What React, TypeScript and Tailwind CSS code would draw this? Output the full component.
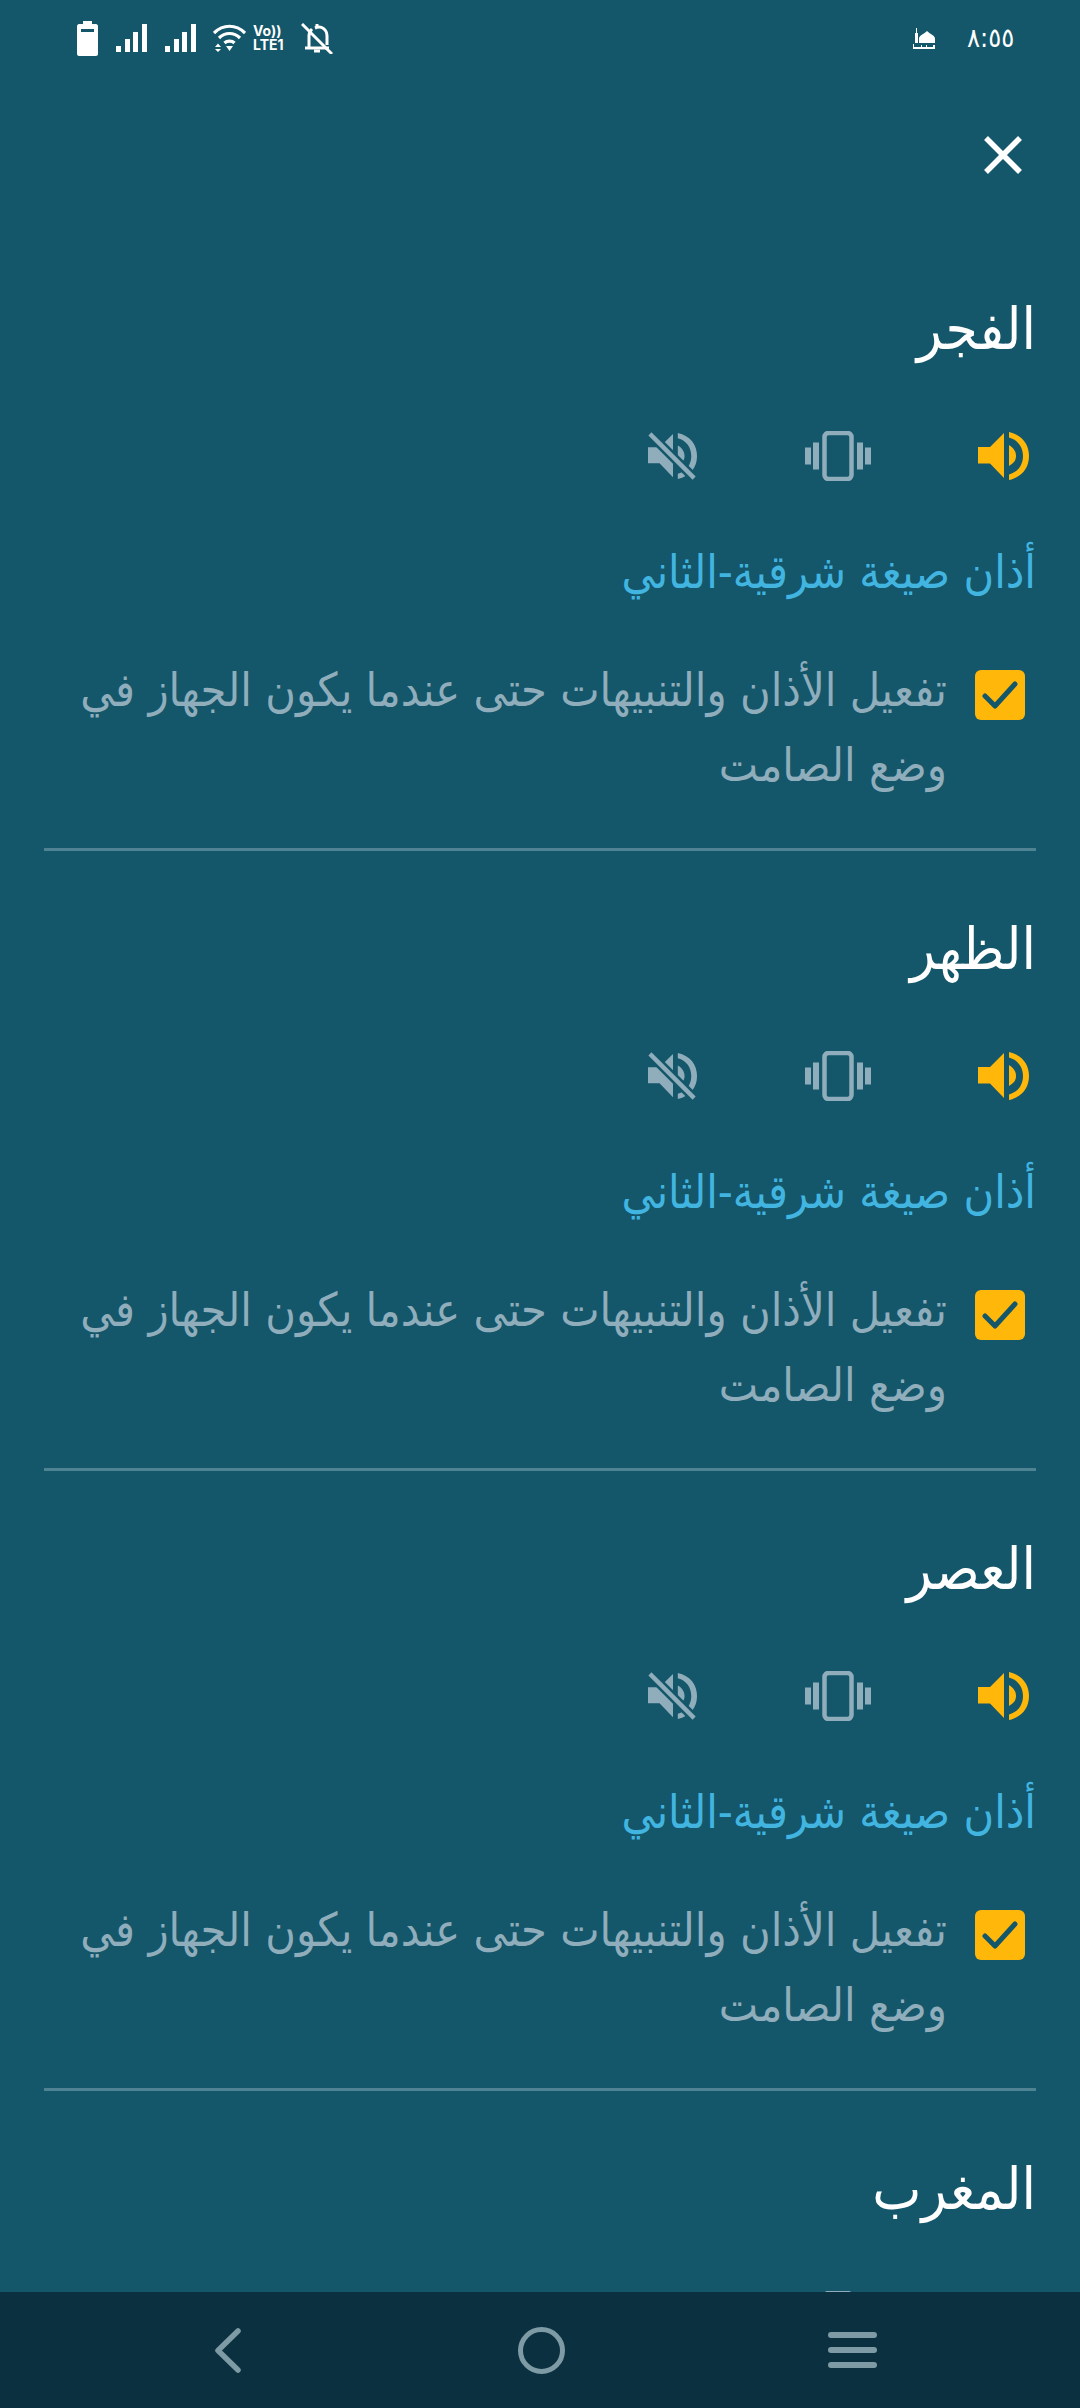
const Speaker = ({ color }: { color: string }) => (
  <g fill={color}>
    <path d="M0 16H12L26 2V47L12 32.5H0Z" />
    <path d="M31 14C36 17 38 21 38 25C38 29 36 32 31 35Z" />
    <path d="M31 1C44 4 51 13 51 25C51 37 44 46 31 49V43.500C40 41 45 34 45 25C45 16 40 9 31 6.500Z" />
  </g>
);

const VolumeOn = () => (
  <svg width="52" height="50" viewBox="0 0 52 50" className="shrink-0">
    <Speaker color="#ffb80a" />
  </svg>
);

const Vibrate = () => (
  <svg width="66" height="50" viewBox="0 0 66 50" className="shrink-0" fill="#8fadbb">
    <rect x="19.500" y="2" width="27" height="46" rx="4" fill="none" stroke="#8fadbb" strokeWidth="4.500" />
    <rect x="8" y="11.500" width="6" height="27" />
    <rect x="52" y="11.500" width="6" height="27" />
    <rect x="0" y="16.500" width="6" height="17" />
    <rect x="60" y="16.500" width="6" height="17" />
  </svg>
);

const Mute = () => (
  <svg width="50" height="50" viewBox="0 0 52 50" className="shrink-0">
    <Speaker color="#8fadbb" />
    <path d="M3 3L48 48" stroke="#14566a" strokeWidth="10" />
    <path d="M2 2L48 48" stroke="#8fadbb" strokeWidth="4.500" />
  </svg>
);

const Signal = () => (
  <svg width="31" height="28" viewBox="0 0 31 28" className="shrink-0" fill="#fff">
    <rect x="0" y="22" width="5" height="6" />
    <rect x="9" y="15" width="5" height="13" />
    <rect x="17" y="8" width="5" height="20" />
    <rect x="26" y="0" width="5" height="28" />
  </svg>
);

const Wifi = () => (
  <svg width="33" height="28" viewBox="0 0 33 28" className="shrink-0" fill="none" stroke="#fff" strokeWidth="3.200">
    <path d="M1 9C10 0 23 0 32 9" />
    <path d="M6 14C12 8 21 8 27 14" />
    <path d="M11.500 19C14 16.500 19 16.500 21.500 19" />
    <path d="M2 23L8 23L5 19.500Z M2 25L8 25L5 28Z M13 22H20L16.500 27Z" fill="#fff" stroke="none" />
  </svg>
);

const Bell = () => (
  <svg width="32" height="31" viewBox="0 0 32 31" className="shrink-0" fill="none" stroke="#fff" strokeWidth="3">
    <path d="M4 25H28" />
    <path d="M8 25V13C8 9 9 8 11 6" />
    <path d="M14 5C21 2 26 7 26 13V22" />
    <path d="M13 28H19" />
    <path d="M16 1V4" />
    <path d="M1 1L31 31" />
  </svg>
);

const Mosque = () => (
  <svg width="22" height="21" viewBox="0 0 22 21" className="shrink-0" fill="#fff">
    <rect x="2" y="5" width="3" height="10" />
    <rect x="3" y="0" width="1" height="5" />
    <path d="M6 15V10C7 7 11 6 14 3C17 6 21 7 22 10V15Z" />
    <path d="M0 16H1V19H8V17H9V19H13V17H14V19H20V17H22V21H0Z" />
  </svg>
);

const Section = ({ title, last }: { title: string; last?: boolean }) => (
  <section className={`mx-[44px] flex flex-col ${last ? "" : "border-b-[3px] border-[#4f8293]"}`}>
    <h2 className="mt-[62px] mb-[66px] h-[72px] text-[58px] leading-[72px] font-extralight text-white">{title}</h2>
    <div className="mb-[61px] flex h-[50px] items-center gap-[107px] pr-[6px]">
      <VolumeOn />
      <Vibrate />
      <Mute />
    </div>
    <p className="mb-[68px] h-[60px] text-[46.500px] leading-[60px] font-extralight whitespace-nowrap text-[#41b5e0]">أذان صيغة شرقية-الثاني</p>
    <div className="mb-[45px] flex items-start gap-[28px] pr-[11px]">
      <span className="flex h-[50px] w-[50px] shrink-0 items-center justify-center rounded-[6px] bg-[#ffb80a]">
        <svg width="38" height="34" viewBox="0 0 38 34" fill="none" stroke="#14566a" strokeWidth="5" strokeLinecap="round" strokeLinejoin="round">
          <path d="M4 18L14 28L34 6" />
        </svg>
      </span>
      <p className="-mt-[17px] w-[880px] text-[46.500px] leading-[75px] font-extralight text-[#8fadbb]">
        تفعيل الأذان والتنبيهات حتى عندما يكون الجهاز في وضع الصامت
      </p>
    </div>
  </section>
);

export default function App() {
  return (
    <div className="flex h-[2408px] w-[1080px] flex-col overflow-hidden bg-[#14566a] font-['DejaVu_Sans_Condensed','DejaVu_Sans',sans-serif]">
      <div dir="ltr" className="flex h-[76px] shrink-0 items-center justify-between pr-[67px] pl-[77px]">
        <div className="flex items-center">
          <svg width="21" height="35" viewBox="0 0 21 35" className="shrink-0" fill="#fff">
            <path d="M6 0H15V3H19C20 3 21 4 21 5V33C21 34 20 35 19 35H2C1 35 0 34 0 33V5C0 4 1 3 2 3H6Z" />
            <rect x="4" y="8" width="13" height="3" fill="#14566a" />
          </svg>
          <span className="ml-[18px]"><Signal /></span>
          <span className="ml-[18px]"><Signal /></span>
          <span className="ml-[17px]"><Wifi /></span>
          <span className="ml-[7px] flex w-[37px] flex-col font-['Inter',sans-serif] text-[14px] leading-[14px] font-bold text-white">
            <span>Vo))</span>
            <span>LTE1</span>
          </span>
          <span className="ml-[11px]"><Bell /></span>
        </div>
        <div className="flex items-center gap-[32px]">
          <Mosque />
          <span className="w-[46px] text-[27px] leading-[28px] text-white">٨:٥٥</span>
        </div>
      </div>
      <div className="flex h-[155px] shrink-0 justify-end pt-[59px] pr-[57px]">
        <svg width="40" height="40" viewBox="0 0 40 40" stroke="#fff" strokeWidth="5.500" fill="none">
          <path d="M3 3L37 37M37 3L3 37" />
        </svg>
      </div>
      <main dir="rtl" className="min-h-0 flex-1 overflow-hidden">
        <Section title="الفجر" />
        <Section title="الظهر" />
        <Section title="العصر" />
        <Section title="المغرب" last />
      </main>
      <nav className="relative z-10 flex h-[116px] shrink-0 items-center bg-[#0b3040]">
        <svg width="28" height="45" viewBox="0 0 28 45" className="ml-[214px]" fill="none" stroke="#7d9aa5" strokeWidth="5.500" strokeLinecap="round" strokeLinejoin="round">
          <path d="M24 3L4 22.500L24 42" />
        </svg>
        <svg width="47" height="47" viewBox="0 0 47 47" className="ml-[276px]" fill="none" stroke="#7d9aa5" strokeWidth="5">
          <circle cx="23.500" cy="23.500" r="21" />
        </svg>
        <span className="ml-[263px] flex w-[49px] flex-col gap-[9px]">
          <span className="h-[6px] rounded-full bg-[#7d9aa5]" />
          <span className="h-[6px] rounded-full bg-[#7d9aa5]" />
          <span className="h-[6px] rounded-full bg-[#7d9aa5]" />
        </span>
      </nav>
    </div>
  );
}
